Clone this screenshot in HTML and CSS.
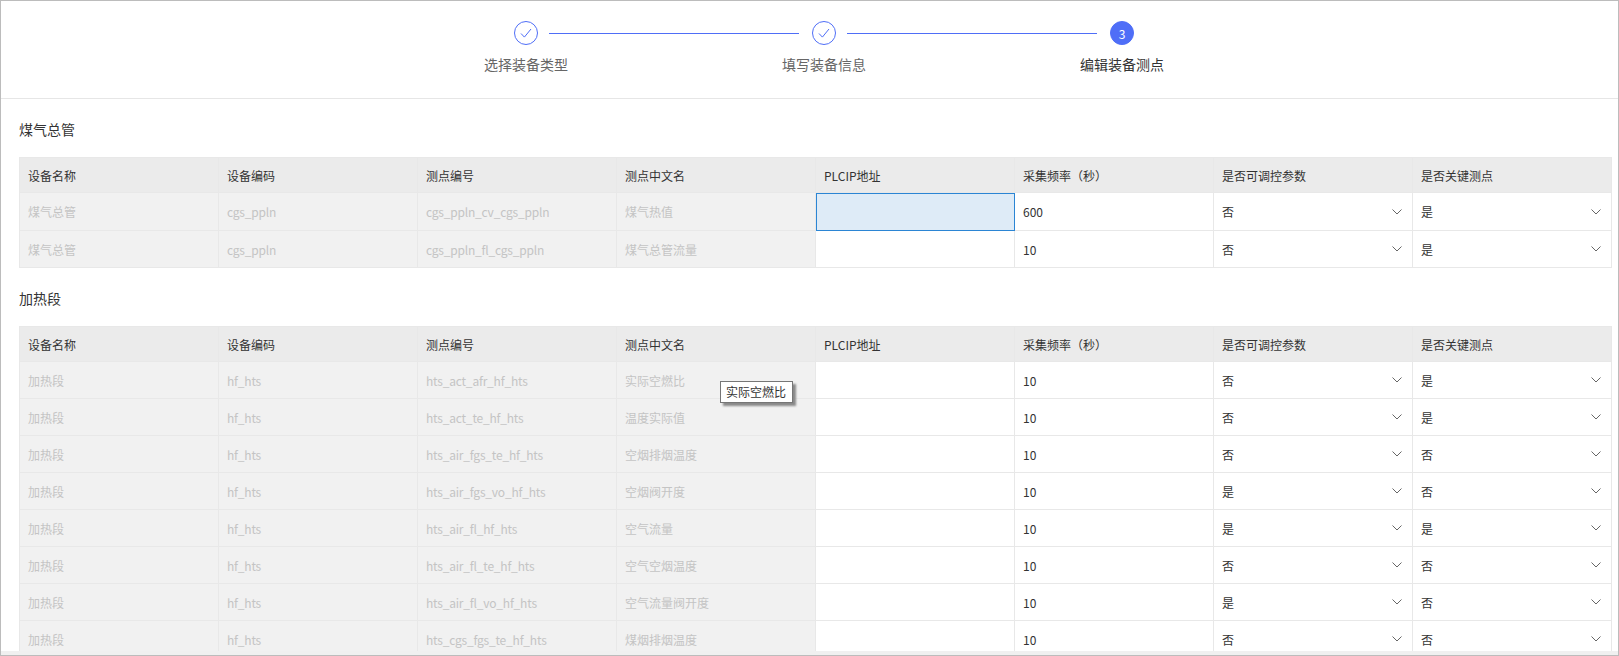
FILE: index.html
```html
<!DOCTYPE html>
<html lang="zh-CN">
<head>
  <meta charset="UTF-8" />
  <title>编辑装备测点</title>
  <link rel="stylesheet" href="styles.css">
</head>
<body>
  <div class="frame">
    <div class="steps">
      <div class="step done">
        <div class="step-icon"><svg width="14" height="14" viewBox="0 0 14 14"><path d="M2 7.5l3.4 3.6L12 3" fill="none" stroke="#4f6ef7" stroke-width="1"/></svg></div>
        <div class="step-label">选择装备类型</div>
      </div>
      <div class="step done">
        <div class="step-icon"><svg width="14" height="14" viewBox="0 0 14 14"><path d="M2 7.5l3.4 3.6L12 3" fill="none" stroke="#4f6ef7" stroke-width="1"/></svg></div>
        <div class="step-label">填写装备信息</div>
      </div>
      <div class="step active">
        <div class="step-icon">3</div>
        <div class="step-label">编辑装备测点</div>
      </div>
    </div>

    <div class="content">
      <div class="section-title">煤气总管</div>
      <table class="point-table">
        <thead>
          <tr><th>设备名称</th><th>设备编码</th><th>测点编号</th><th>测点中文名</th><th>PLCIP地址</th><th>采集频率（秒）</th><th>是否可调控参数</th><th>是否关键测点</th></tr>
        </thead>
        <tbody id="gasRows"></tbody>
      </table>

      <div class="section-title">加热段</div>
      <table class="point-table">
        <thead>
          <tr><th>设备名称</th><th>设备编码</th><th>测点编号</th><th>测点中文名</th><th>PLCIP地址</th><th>采集频率（秒）</th><th>是否可调控参数</th><th>是否关键测点</th></tr>
        </thead>
        <tbody id="heatRows"></tbody>
      </table>
    </div>

    <div class="cell-tip">实际空燃比</div>
    <div class="bottom-strip"></div>
  </div>

  <script>
    const arrow = '<svg class="arrow" width="10" height="6" viewBox="0 0 10 6"><path d="M.5 .5L5 5l4.5-4.5" fill="none" stroke="#666" stroke-width="1"/></svg>';

    function selectCell(value) {
      return `<td class="select-cell"><div class="select-box"><span>${value}</span>${arrow}</div></td>`;
    }

    function renderRows(id, device, code, rows) {
      const body = document.getElementById(id);
      rows.forEach(row => {
        const focus = row[4] ? ' focused' : '';
        const tr = document.createElement('tr');
        tr.innerHTML = `
          <td class="locked">${device}</td>
          <td class="locked code">${code}</td>
          <td class="locked code">${row[0]}</td>
          <td class="locked">${row[1]}</td>
          <td class="edit${focus}"></td>
          <td class="edit">${row[2]}</td>
          ${selectCell(row[3][0])}
          ${selectCell(row[3][1])}
        `;
        body.appendChild(tr);
      });
    }

    renderRows('gasRows', '煤气总管', 'cgs_ppln', [
      ['cgs_ppln_cv_cgs_ppln', '煤气热值', '600', '否是', true],
      ['cgs_ppln_fl_cgs_ppln', '煤气总管流量', '10', '否是', false]
    ]);

    renderRows('heatRows', '加热段', 'hf_hts', [
      ['hts_act_afr_hf_hts', '实际空燃比', '10', '否是'],
      ['hts_act_te_hf_hts', '温度实际值', '10', '否是'],
      ['hts_air_fgs_te_hf_hts', '空烟排烟温度', '10', '否否'],
      ['hts_air_fgs_vo_hf_hts', '空烟阀开度', '10', '是否'],
      ['hts_air_fl_hf_hts', '空气流量', '10', '是是'],
      ['hts_air_fl_te_hf_hts', '空气空烟温度', '10', '否否'],
      ['hts_air_fl_vo_hf_hts', '空气流量阀开度', '10', '是否'],
      ['hts_cgs_fgs_te_hf_hts', '煤烟排烟温度', '10', '否否']
    ]);
  </script>
</body>
</html>
```

FILE: styles.css
```css
html, body {
  margin: 0;
  height: 100%;
  overflow: hidden;
}

body {
  font-family: "Noto Sans CJK SC", "Noto Sans", sans-serif;
  font-size: 12px;
  color: #333;
  background-color: #fff;
}

.frame {
  position: relative;
  box-sizing: border-box;
  height: 656px;
  border: 1px solid #bcbcbc;
  display: flex;
  flex-direction: column;
  overflow: hidden;
}

/* шаги */
.steps {
  flex: none;
  box-sizing: border-box;
  height: 98px;
  padding: 20px 0 0 376px;
  display: grid;
  grid-template-columns: repeat(3, 298px);
  border-bottom: 1px solid #e6e6e6;
}

.step {
  position: relative;
  display: flex;
  flex-direction: column;
  align-items: center;
}

.step-icon {
  width: 24px;
  height: 24px;
  box-sizing: border-box;
  border-radius: 50%;
  border: 1px solid #4f6ef7;
  display: flex;
  align-items: center;
  justify-content: center;
  color: #fff;
  background-color: #fff;
}

.step.active .step-icon {
  background-color: #4f6ef7;
}

.step.done::after {
  content: "";
  position: absolute;
  top: 12px;
  left: calc(50% + 23px);
  width: 250px;
  height: 1px;
  background-color: #4f6ef7;
}

.step-label {
  margin-top: 8px;
  font-size: 14px;
  line-height: 22px;
  color: #666;
}

.step.active .step-label {
  color: #333;
}

/* таблицы */
.content {
  flex: 1;
  min-height: 0;
  padding: 0 6px 0 18px;
  overflow: hidden;
}

.section-title {
  margin-top: 20px;
  margin-bottom: 16px;
  height: 22px;
  line-height: 20px;
  font-size: 14px;
}

.point-table {
  width: 1593px;
  table-layout: fixed;
  border-collapse: collapse;
  border: 1px solid #e8e8e8;
}

.point-table th,
.point-table td {
  box-sizing: border-box;
  padding: 0 8px;
  text-align: left;
  font-weight: normal;
  white-space: nowrap;
  border: 1px solid #e8e8e8;
}

.point-table th {
  height: 35px;
  background-color: #ebebeb;
}

.point-table td {
  height: 37px;
}

#gasRows tr:first-child td {
  height: 38px;
}

.locked {
  background-color: #f1f1f1;
  color: #c4c4c4;
}

.code {
  letter-spacing: -0.2px;
}

.point-table td.focused {
  background-color: #deebf7;
  outline: 1px solid #2b85d4;
  outline-offset: -1px;
}

.select-box {
  display: flex;
  justify-content: space-between;
  align-items: center;
  padding-right: 2px;
}

/* подсказка браузера */
.cell-tip {
  position: absolute;
  left: 719px;
  top: 380px;
  padding: 1px 6px 1px 5px;
  line-height: 18px;
  background-color: #fff;
  border: 1px solid #767676;
  box-shadow: 3px 3px 2px #8a8a8a;
  white-space: nowrap;
}

.bottom-strip {
  flex: none;
  height: 4px;
  background-color: #f0f0f0;
}
```
